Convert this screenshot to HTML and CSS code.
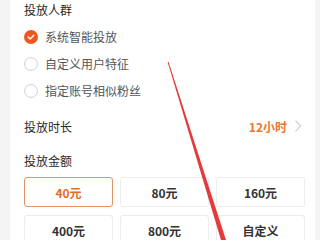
FILE: index.html
```html
<!DOCTYPE html>
<html lang="zh">
<head>
<meta charset="utf-8">
<link rel="stylesheet" href="styles.css">
</head>
<body>
<div class="panel">
  <div class="title">投放人群</div>
  <div class="radio checked"><span class="dot"><svg viewBox="0 0 14 14" width="14" height="14"><circle cx="7" cy="7" r="7" fill="#f0561f"/><path d="M4.2 7.1 L6.2 9 L9.8 5.3" fill="none" stroke="#fff" stroke-width="1.4" stroke-linecap="round" stroke-linejoin="round"/></svg></span><span class="label">系统智能投放</span></div>
  <div class="radio"><span class="dot"><svg viewBox="0 0 14 14" width="14" height="14"><circle cx="7" cy="7" r="6.4" fill="#fff" stroke="#cfcfcf" stroke-width="1"/></svg></span><span class="label">自定义用户特征</span></div>
  <div class="radio"><span class="dot"><svg viewBox="0 0 14 14" width="14" height="14"><circle cx="7" cy="7" r="6.4" fill="#fff" stroke="#cfcfcf" stroke-width="1"/></svg></span><span class="label">指定账号相似粉丝</span></div>
  <div class="row">
    <span class="title-text">投放时长</span>
    <span class="value">12小时<svg class="chev" viewBox="0 0 8 14" width="8" height="14"><path d="M1.5 1.5 L6.5 7 L1.5 12.5" fill="none" stroke="#c4c4c4" stroke-width="1.1"/></svg></span>
  </div>
  <div class="title amount">投放金额</div>
  <div class="grid">
    <div class="btn selected">40元</div>
    <div class="btn">80元</div>
    <div class="btn">160元</div>
    <div class="btn">400元</div>
    <div class="btn">800元</div>
    <div class="btn">自定义</div>
  </div>
</div>
<svg class="arrow" viewBox="0 0 320 240" width="320" height="240"><polygon points="167.6,62 168.6,62 226,240 221,240" fill="#e63a3a"/></svg>
</body>
</html>
```
FILE: styles.css
```css
html, body {
  margin: 0;
  padding: 0;
  background: #f4f4f4;
  width: 320px;
  height: 240px;
  overflow: hidden;
  font-family: "Noto Sans CJK SC", "Noto Sans", sans-serif;
}
body { position: relative; }
.panel {
  margin-left: 10px;
  width: 305px;
  height: 240px;
  box-sizing: border-box;
  background: #fff;
  padding: 0 10px 0 14px;
}
.title {
  height: 20px;
  line-height: 20px;
  font-size: 12px;
  color: #2a2a2a;
  font-weight: 400;
}
.title + .radio { margin-top: 3px; }
.radio {
  height: 27px;
  display: flex;
  align-items: center;
}
.dot {
  width: 14px;
  height: 14px;
  display: flex;
  margin-right: 7px;
}
.label {
  font-size: 12px;
  color: #555;
  line-height: 14px;
}
.row {
  margin-top: 8px;
  height: 28px;
  display: flex;
  align-items: center;
  justify-content: space-between;
}
.title-text {
  font-size: 12px;
  color: #2a2a2a;
  font-weight: 400;
}
.value {
  display: flex;
  align-items: center;
  font-size: 12px;
  color: #e8782c;
  font-weight: 700;
  padding-right: 3px;
}
.chev { margin-left: 7px; }
.amount {
  margin-top: 10px;
  height: 22px;
  line-height: 22px;
}
.grid {
  margin-top: 5px;
  display: grid;
  grid-template-columns: repeat(3, 89px);
  column-gap: 7px;
  row-gap: 8px;
}
.btn {
  height: 30px;
  box-sizing: border-box;
  border: 1px solid #ececec;
  border-radius: 3px;
  display: flex;
  align-items: center;
  justify-content: center;
  font-size: 12px;
  font-weight: 700;
  color: #333;
}
.btn.selected {
  border-color: #dc9566;
  color: #e26c22;
}
.arrow {
  position: absolute;
  left: 0;
  top: 0;
}
```
